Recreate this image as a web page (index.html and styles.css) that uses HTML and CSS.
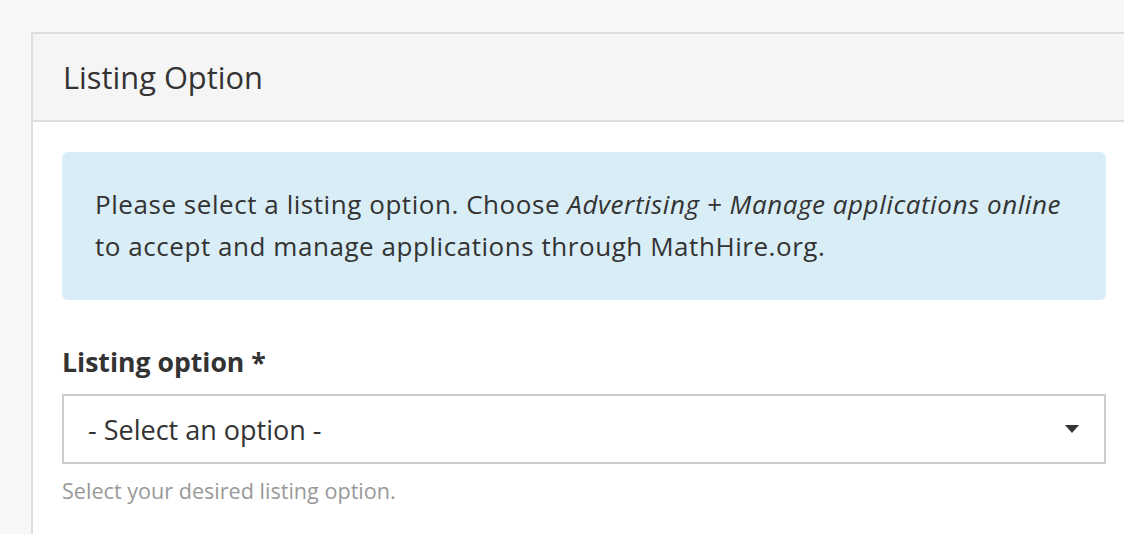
FILE: index.html
```html
<!DOCTYPE html>
<html>
<head>
<meta charset="utf-8">
<link rel="stylesheet" href="styles.css">
</head>
<body>
<div class="panel">
  <div class="panel-heading"><h2 class="panel-title">Listing Option</h2></div>
  <div class="panel-body">
    <div class="alert">Please select a listing option. Choose <em>Advertising + Manage applications online</em> to accept and manage applications through MathHire.org.</div>
    <label class="field-label">Listing option *</label>
    <div class="select">
      <span class="select-text">- Select an option -</span>
      <svg class="caret" width="14" height="8" viewBox="0 0 14 8"><path d="M0 0H14L7 8Z" fill="#333"/></svg>
    </div>
    <div class="help">Select your desired listing option.</div>
  </div>
</div>
</body>
</html>
```
FILE: styles.css
```css
html, body { margin: 0; padding: 0; }
body {
  background: #f7f7f7;
  font-family: "Open Sans", Lato, sans-serif;
  color: #333;
  overflow: hidden;
  height: 534px;
}
.panel {
  margin: 32px 0 0 31px;
  width: 1140px;
  background: #fff;
  border: 2px solid #dddddd;
  border-right: none;
  height: 600px;
}
.panel-heading {
  background: #f5f5f5;
  border-bottom: 2px solid #dddddd;
  height: 86px;
  display: flex;
  align-items: center;
  padding-left: 30px;
}
.panel-title {
  margin: 0;
  font-weight: 400;
  font-size: 30.8px;
  color: #333;
  line-height: 1;
}
.panel-body {
  padding: 30px 0 0 29px;
  width: 1044px;
}
.alert {
  background: #d9edf7;
  border-radius: 6px;
  padding: 31px 32px 33px 33px;
  font-size: 26px;
  letter-spacing: 0.55px;
  line-height: 42px;
  color: #333;
}
.alert em { font-style: italic; }
.field-label {
  display: block;
  margin-top: 44px;
  font-weight: 700;
  font-size: 26.6px;
  line-height: 36px;
}
.select {
  margin-top: 14px;
  height: 66px;
  border: 2px solid #cccccc;
  display: flex;
  align-items: center;
  justify-content: space-between;
  padding: 0 25px 0 24px;
}
.select-text { font-size: 27px; }
.help {
  margin-top: 13px;
  font-size: 21.6px;
  line-height: 28px;
  color: #999;
}
```
